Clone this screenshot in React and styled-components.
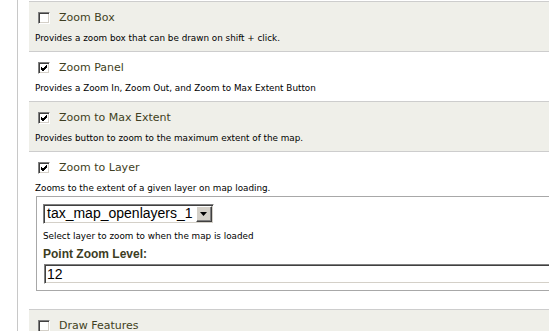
import styled, { createGlobalStyle } from "styled-components";

const GlobalStyle = createGlobalStyle`
    html, body {
        margin: 0;
        padding: 0;
        background: #ffffff;
        overflow: hidden;
    }
    body {
        font-family: "DejaVu Sans", Verdana, sans-serif;
        color: #000;
    }
`;

const Page = styled.div`
    margin-left: 17px;
    padding: 1px 0 0 11px;
    border-left: 1px solid #c8c8c8;
    min-height: 331px;
    box-sizing: border-box;
    overflow: hidden;
`;

const Row = styled.div`
    border-top: 1px solid #cdcdcd;
    background: ${(p) => (p.shaded ? "#efefe9" : "#ffffff")};
    padding: 7px 6px ${(p) => (p.tall ? "18px" : "7px")};
`;

const TitleLine = styled.label`
    display: flex;
    align-items: center;
    height: 17px;
    padding-left: 3px;
    gap: 9px;
`;

const Box = styled.span`
    width: 12px;
    height: 12px;
    box-sizing: border-box;
    background: #fff;
    border-style: solid;
    border-width: 1px;
    border-color: #808080 #ffffff #ffffff #808080;
    box-shadow: inset 1px 1px 0 #404040, inset -1px -1px 0 #d4d0c8;
    display: flex;
    align-items: center;
    justify-content: center;
`;

const Title = styled.span`
    font-size: 11px;
    letter-spacing: 0;
    color: #3f3f22;
`;

const Desc = styled.div`
    margin-top: 6px;
    font-size: 8.8px;
    line-height: 12px;
    white-space: nowrap;
`;

const Fieldset = styled.div`
    margin: 2px 0 0 1px;
    width: 560px;
    border: 1px solid #a8a8a8;
    padding: 6px;
`;

const SelectBox = styled.div`
    display: inline-flex;
    align-items: stretch;
    height: 20px;
    box-sizing: border-box;
    border-style: solid;
    border-width: 1px;
    border-color: #808080 #ffffff #ffffff #808080;
    box-shadow: inset 1px 1px 0 #404040, inset -1px -1px 0 #d4d0c8;
    background: #fff;
`;

const SelectText = styled.span`
    font-family: "Liberation Sans", Arial, sans-serif;
    font-size: 14px;
    line-height: 17px;
    padding: 0 3px;
`;

const Arrow = styled.span`
    width: 16px;
    margin: 1px 1px 1px 0;
    background: #d4d0c8;
    box-sizing: border-box;
    border-style: solid;
    border-width: 1px;
    border-color: #ffffff #404040 #404040 #ffffff;
    box-shadow: inset -1px -1px 0 #808080;
    display: flex;
    align-items: center;
    justify-content: center;
`;

const Hint = styled.div`
    margin-top: 6px;
    font-size: 8.8px;
    line-height: 12px;
`;

const Label = styled.div`
    margin-top: 5px;
    font-family: "Liberation Sans", Arial, sans-serif;
    font-weight: bold;
    font-size: 12px;
    line-height: 14px;
    color: #3d3d1f;
`;

const Input = styled.div`
    margin: 3px 0 0 1px;
    height: 20px;
    box-sizing: border-box;
    border-style: solid;
    border-width: 1px;
    border-color: #808080 #ffffff #ffffff #808080;
    box-shadow: inset 1px 1px 0 #404040, inset -1px -1px 0 #d4d0c8;
    font-family: "Liberation Sans", Arial, sans-serif;
    font-size: 14px;
    line-height: 18px;
    padding-left: 2px;
`;

const Check = ({ checked }) => (
    <Box>
        {checked && (
            <svg width="8" height="8" viewBox="0 0 8 8">
                <path d="M1 3 L3 5 L7 1 M1 4 L3 6 L7 2 M1 5 L3 7 L7 3" stroke="#000" strokeWidth="1" fill="none" />
            </svg>
        )}
    </Box>
);

const options = [
    { title: "Zoom Box", desc: "Provides a zoom box that can be drawn on shift + click.", checked: false },
    { title: "Zoom Panel", desc: "Provides a Zoom In, Zoom Out, and Zoom to Max Extent Button", checked: true },
    { title: "Zoom to Max Extent", desc: "Provides button to zoom to the maximum extent of the map.", checked: true },
];

const App = () => (
    <>
        <GlobalStyle />
        <Page>
            {options.map((o, i) => (
                <Row key={o.title} shaded={i % 2 === 0}>
                    <TitleLine>
                        <Check checked={o.checked} />
                        <Title>{o.title}</Title>
                    </TitleLine>
                    <Desc>{o.desc}</Desc>
                </Row>
            ))}
            <Row tall>
                <TitleLine>
                    <Check checked />
                    <Title>Zoom to Layer</Title>
                </TitleLine>
                <Desc>Zooms to the extent of a given layer on map loading.</Desc>
                <Fieldset>
                    <SelectBox>
                        <SelectText>tax_map_openlayers_1</SelectText>
                        <Arrow>
                            <svg width="7" height="4" viewBox="0 0 7 4">
                                <path d="M0 0 H7 L3.5 4 Z" fill="#000" />
                            </svg>
                        </Arrow>
                    </SelectBox>
                    <Hint>Select layer to zoom to when the map is loaded</Hint>
                    <Label>Point Zoom Level:</Label>
                    <Input>12</Input>
                </Fieldset>
            </Row>
            <Row shaded>
                <TitleLine>
                    <Check />
                    <Title>Draw Features</Title>
                </TitleLine>
            </Row>
        </Page>
    </>
);

export default App;
